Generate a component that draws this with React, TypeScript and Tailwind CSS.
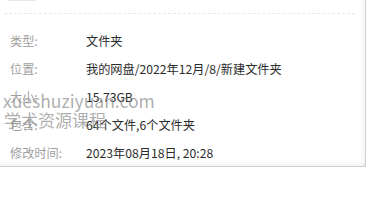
const rows = [
  { label: "类型:", value: "文件夹" },
  { label: "位置:", value: "我的网盘/2022年12月/8/新建文件夹" },
  { label: "大小:", value: "15.73GB" },
  { label: "包含:", value: "64个文件,6个文件夹" },
  { label: "修改时间:", value: "2023年08月18日, 20:28" },
]

export default function App() {
  return (
    <div
      className="relative w-[376px] h-[217px] bg-white overflow-hidden"
      style={{ fontFamily: '"Noto Sans CJK SC", "Noto Sans", sans-serif' }}
    >
      <div className="relative w-[366px] h-[167px] border-r border-b border-[#cfcfcf] shadow-[inset_-6px_-6px_8px_-8px_rgba(0,0,0,0.15)]">
        <div className="ml-[8px] w-[28px] h-[1px] bg-[#e6e6e6]" />
        <div className="mt-[12px] ml-[4px] w-[351px] border-t border-dashed border-[#e8e8e8]" />
        <div className="pt-[13px]">
          {rows.map((r) => (
            <div key={r.label} className="flex items-center h-[28px] text-[12.2px]">
              <span className="w-[86px] pl-[10px] text-[#a0a0a0]">{r.label}</span>
              <span className="text-[#2b2b2b]">{r.value}</span>
            </div>
          ))}
        </div>
      </div>

      {/* watermark */}
      <div className="absolute left-[3px] top-[90px] text-[17.5px] leading-[22px] text-[#8a8a8a]/70 pointer-events-none">
        xueshuziyuan.com
      </div>
      <div className="absolute left-[4px] top-[109px] text-[17px] leading-[22px] text-[#8a8a8a]/70 pointer-events-none">
        学术资源课程
      </div>
    </div>
  )
}
